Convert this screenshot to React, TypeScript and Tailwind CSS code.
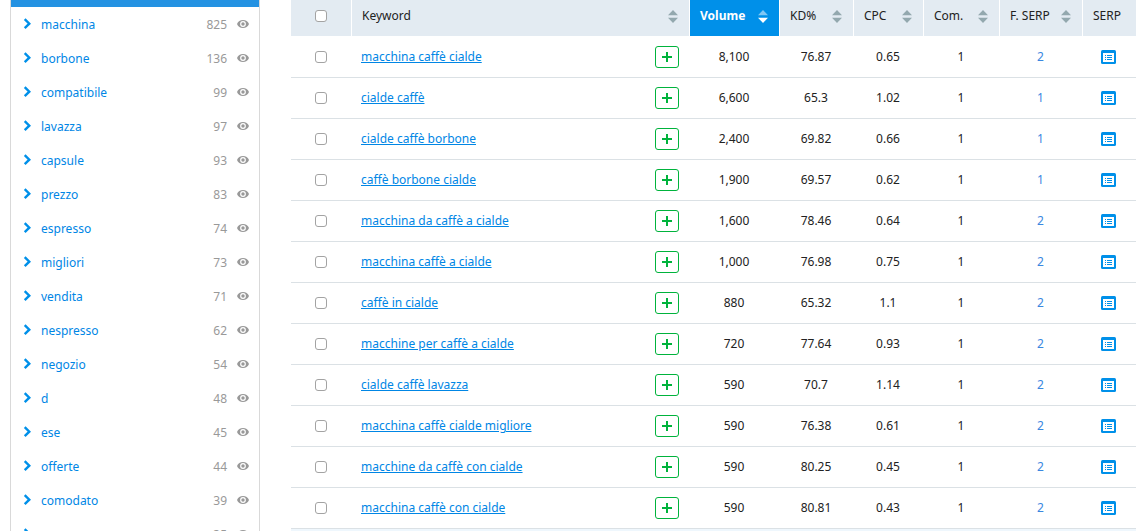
import React from 'react';
import clsx from 'clsx';

const groups = [
  { name: 'macchina', count: 825 },
  { name: 'borbone', count: 136 },
  { name: 'compatibile', count: 99 },
  { name: 'lavazza', count: 97 },
  { name: 'capsule', count: 93 },
  { name: 'prezzo', count: 83 },
  { name: 'espresso', count: 74 },
  { name: 'migliori', count: 73 },
  { name: 'vendita', count: 71 },
  { name: 'nespresso', count: 62 },
  { name: 'negozio', count: 54 },
  { name: 'd', count: 48 },
  { name: 'ese', count: 45 },
  { name: 'offerte', count: 44 },
  { name: 'comodato', count: 39 },
  { name: 'uso', count: 35 },
];

const columns = [
  { label: 'Keyword', width: '', sortable: true },
  { label: 'Volume', width: 'w-[90px]', sortable: true, active: true },
  { label: 'KD%', width: 'w-[74px]', sortable: true },
  { label: 'CPC', width: 'w-[70px]', sortable: true },
  { label: 'Com.', width: 'w-[76px]', sortable: true },
  { label: 'F. SERP', width: 'w-[83px]', sortable: true },
  { label: 'SERP', width: 'w-[53px]', sortable: false },
];

const rows = [
  { keyword: 'macchina caffè cialde', volume: '8,100', kd: '76.87', cpc: '0.65', com: '1', features: '2' },
  { keyword: 'cialde caffè', volume: '6,600', kd: '65.3', cpc: '1.02', com: '1', features: '1' },
  { keyword: 'cialde caffè borbone', volume: '2,400', kd: '69.82', cpc: '0.66', com: '1', features: '1' },
  { keyword: 'caffè borbone cialde', volume: '1,900', kd: '69.57', cpc: '0.62', com: '1', features: '1' },
  { keyword: 'macchina da caffè a cialde', volume: '1,600', kd: '78.46', cpc: '0.64', com: '1', features: '2' },
  { keyword: 'macchina caffè a cialde', volume: '1,000', kd: '76.98', cpc: '0.75', com: '1', features: '2' },
  { keyword: 'caffè in cialde', volume: '880', kd: '65.32', cpc: '1.1', com: '1', features: '2' },
  { keyword: 'macchine per caffè a cialde', volume: '720', kd: '77.64', cpc: '0.93', com: '1', features: '2' },
  { keyword: 'cialde caffè lavazza', volume: '590', kd: '70.7', cpc: '1.14', com: '1', features: '2' },
  { keyword: 'macchina caffè cialde migliore', volume: '590', kd: '76.38', cpc: '0.61', com: '1', features: '2' },
  { keyword: 'macchine da caffè con cialde', volume: '590', kd: '80.25', cpc: '0.45', com: '1', features: '2' },
  { keyword: 'macchina caffè con cialde', volume: '590', kd: '80.81', cpc: '0.43', com: '1', features: '2' },
];

const ChevronIcon = () => (
  <svg width="8" height="12" viewBox="0 0 8 12" fill="none" stroke="#0090e9" strokeWidth="2.4" aria-hidden="true">
    <path d="M1.700 1.200 6.300 5.700 1.700 10.200" />
  </svg>
);

const EyeIcon = () => (
  <svg width="12" height="8" viewBox="0 0 12 8" aria-hidden="true">
    <path
      fill="#999"
      fillRule="evenodd"
      d="M6 0C3.200 0 1 1.600 0 4c1 2.400 3.200 4 6 4s5-1.600 6-4C11 1.600 8.800 0 6 0Zm0 1.100a2.900 2.900 0 1 1 0 5.800 2.900 2.900 0 0 1 0-5.800Z"
    />
    <circle cx="6" cy="4" r="1.700" fill="#999" />
  </svg>
);

const SortIcon = ({ active }: { active?: boolean }) => (
  <svg width="10" height="13" viewBox="0 0 10 13" aria-hidden="true">
    <path d="M5 0 10 5.200H0Z" fill={active ? '#80c7f4' : '#93a8ae'} />
    <path d="M0 7.800h10L5 13Z" fill={active ? '#fff' : '#93a8ae'} />
  </svg>
);

const PlusIcon = () => (
  <svg width="10" height="10" viewBox="0 0 10 10" fill="#00b33c" aria-hidden="true">
    <path d="M4 0h2v4h4v2H6v4H4V6H0V4h4z" />
  </svg>
);

const SerpIcon = () => (
  <svg width="15" height="14" viewBox="0 0 15 14" aria-hidden="true">
    <rect width="15" height="14" rx="1.500" fill="#0090e9" />
    <rect x="2" y="3" width="11" height="9" fill="#fff" />
    <path d="M4 5.500h1M4 7.500h1M4 9.500h1M6 5.500h5M6 7.500h5M6 9.500h5" stroke="#0090e9" />
  </svg>
);

const Checkbox = ({ label }: { label: string }) => (
  <input
    type="checkbox"
    aria-label={label}
    className="block mx-auto size-3 appearance-none rounded-[3px] border border-[#a3a3a3] bg-white checked:bg-[#0090e9]"
  />
);

const GroupList = () => (
  <aside className="w-[250px] shrink-0 border-x border-[#d9d9d9]">
    <div className="h-[7px] bg-[#2492e2]" />
    <ul>
      {groups.map((group) => (
        <li key={group.name} className="flex h-[34px] items-center pl-3 pr-[10px]">
          <button type="button" aria-label={`Expand ${group.name}`} className="w-[18px] shrink-0">
            <ChevronIcon />
          </button>
          <a href="#" className="flex-1 pt-[2px] text-[#0086e5]">{group.name}</a>
          <span className="pt-[2px] text-[#999]">{group.count}</span>
          <button type="button" aria-label={`Exclude ${group.name}`} className="ml-[10px]">
            <EyeIcon />
          </button>
        </li>
      ))}
    </ul>
  </aside>
);

const KeywordTable = () => (
  <table className="w-full table-fixed border-separate border-spacing-0">
    <thead>
      <tr className="h-[37px]">
        <th className="w-[61px] border-b border-r border-white bg-[#e3ebf2] p-0 pb-1">
          <Checkbox label="Select all keywords" />
        </th>
        {columns.map((col) => (
          <th
            key={col.label}
            className={clsx(
              'border-b border-white p-0 pb-1 pl-[10px] text-left',
              col.width,
              col.sortable && 'border-r pr-[11px]',
              col.active ? 'bg-[#0090e9] font-bold text-white' : 'bg-[#e3ebf2] font-normal'
            )}
          >
            <div className="flex items-center justify-between">
              <span className="whitespace-nowrap">{col.label}</span>
              {col.sortable && (
                <button type="button" aria-label={`Sort by ${col.label}`}>
                  <SortIcon active={col.active} />
                </button>
              )}
            </div>
          </th>
        ))}
      </tr>
    </thead>
    <tbody>
      {rows.map((row) => (
        <tr key={row.keyword} className="h-[41px] text-center [&>td]:border-b [&>td]:border-[#dbe1e5] [&>td]:py-0 [&>td]:pl-0 [&>td]:pr-[2px]">
          <td>
            <Checkbox label={`Select ${row.keyword}`} />
          </td>
          <td>
            <div className="flex items-center justify-between px-[9px]">
              <a href="#" className="text-[#0086e5] underline underline-offset-1">{row.keyword}</a>
              <button
                type="button"
                aria-label={`Add ${row.keyword}`}
                className="flex h-[22px] w-6 items-center justify-center rounded-[3px] border border-[#00b33c]"
              >
                <PlusIcon />
              </button>
            </div>
          </td>
          <td>{row.volume}</td>
          <td>{row.kd}</td>
          <td>{row.cpc}</td>
          <td>{row.com}</td>
          <td>
            <a href="#" className="text-[#3b87df]">{row.features}</a>
          </td>
          <td>
            <button type="button" aria-label={`View SERP for ${row.keyword}`} className="block mx-auto">
              <SerpIcon />
            </button>
          </td>
        </tr>
      ))}
      <tr className="h-[41px] bg-[#eff7fd]">
        <td colSpan={8} />
      </tr>
    </tbody>
  </table>
);

const App = () => {
  return (
    <div className="flex h-screen items-start overflow-hidden bg-white pl-[10px] pr-[5px] font-['Noto_Sans',sans-serif] text-[12px] leading-4 text-[#222]">
      <GroupList />
      <main className="ml-[31px] min-w-0 flex-1">
        <KeywordTable />
      </main>
    </div>
  );
};

export default App;
